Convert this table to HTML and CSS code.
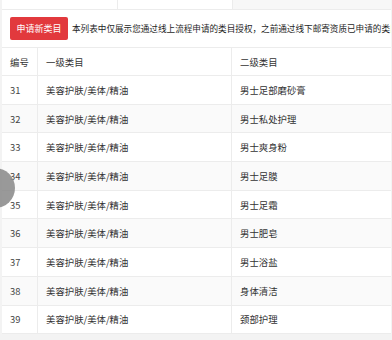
FILE: index.html
```html
<!DOCTYPE html>
<html lang="zh">
<head>
<meta charset="utf-8">
<link rel="stylesheet" href="styles.css">
</head>
<body>
<div class="card">
  <div class="top-strip">
    <div class="ts-cell ts-a"></div>
    <div class="ts-cell ts-b"></div>
    <div class="ts-cell ts-c"></div>
  </div>
  <div class="toolbar">
    <button class="btn-apply">申请新类目</button>
    <span class="note">本列表中仅展示您通过线上流程申请的类目授权，之前通过线下邮寄资质已申请的类目授权请联系客服查询</span>
  </div>
  <div class="table">
    <div class="row head">
      <div class="c c1">编号</div>
      <div class="c c2">一级类目</div>
      <div class="c c3">二级类目</div>
    </div>
    <div class="row"><div class="c c1 num">31</div><div class="c c2">美容护肤/美体/精油</div><div class="c c3">男士足部磨砂膏</div></div>
    <div class="row alt"><div class="c c1 num">32</div><div class="c c2">美容护肤/美体/精油</div><div class="c c3">男士私处护理</div></div>
    <div class="row"><div class="c c1 num">33</div><div class="c c2">美容护肤/美体/精油</div><div class="c c3">男士爽身粉</div></div>
    <div class="row alt"><div class="c c1 num">34</div><div class="c c2">美容护肤/美体/精油</div><div class="c c3">男士足膜</div></div>
    <div class="row"><div class="c c1 num">35</div><div class="c c2">美容护肤/美体/精油</div><div class="c c3">男士足霜</div></div>
    <div class="row alt"><div class="c c1 num">36</div><div class="c c2">美容护肤/美体/精油</div><div class="c c3">男士肥皂</div></div>
    <div class="row"><div class="c c1 num">37</div><div class="c c2">美容护肤/美体/精油</div><div class="c c3">男士浴盐</div></div>
    <div class="row alt"><div class="c c1 num">38</div><div class="c c2">美容护肤/美体/精油</div><div class="c c3">身体清洁</div></div>
    <div class="row"><div class="c c1 num">39</div><div class="c c2">美容护肤/美体/精油</div><div class="c c3">颈部护理</div></div>
  </div>
</div>
<div class="float-ball"></div>
</body>
</html>
```
FILE: styles.css
```css
html, body {
  margin: 0;
  padding: 0;
}
body {
  background: #f3f3f3;
  font-family: "Noto Sans CJK SC", "Noto Sans", sans-serif;
  color: #333;
  width: 392px;
  height: 340px;
  overflow: hidden;
  position: relative;
}
.card {
  margin-left: 2px;
  width: 389px;
  background: #fff;
}
.top-strip {
  display: flex;
  height: 9px;
  border-bottom: 1px solid #ececec;
}
.ts-cell {
  height: 100%;
}
.ts-a {
  width: 115px;
  border-right: 1px solid #ececec;
}
.ts-b {
  width: 114px;
  border-right: 1px solid #ececec;
}
.ts-c {
  flex: 1;
  background: #f7f7f7;
}
.toolbar {
  display: flex;
  align-items: center;
  gap: 4px;
  height: 37px;
  padding-left: 8px;
  white-space: nowrap;
  overflow: hidden;
}
.btn-apply {
  flex: none;
  width: 58px;
  height: 23px;
  border: 0;
  border-radius: 2px;
  background: #e2393d;
  color: #fff;
  font-family: inherit;
  font-size: 9px;
  padding: 0;
  margin-top: -1px;
}
.note {
  font-size: 8.6px;
  color: #1e1e1e;
  margin-top: -1px;
}
.table {
  border-top: 1px solid #ececec;
  overflow: hidden;
}
.row {
  display: flex;
  height: 28.7px;
  box-sizing: border-box;
  border-bottom: 1px solid #ececec;
  font-size: 9.4px;
}
.row.head {
  height: 28px;
}
.row.alt {
  background: #fafafa;
}
.c {
  display: flex;
  align-items: center;
  padding-left: 8px;
  box-sizing: border-box;
  white-space: nowrap;
}
.c1 {
  width: 36px;
  border-right: 1px solid #ececec;
}
.c2 {
  width: 194px;
  border-right: 1px solid #ececec;
}
.c3 {
  flex: 1;
}
.num {
  color: #444;
}
.float-ball {
  position: absolute;
  left: -25px;
  top: 168px;
  width: 40px;
  height: 40px;
  border-radius: 50%;
  background: rgba(135, 135, 135, 0.85);
}
```
